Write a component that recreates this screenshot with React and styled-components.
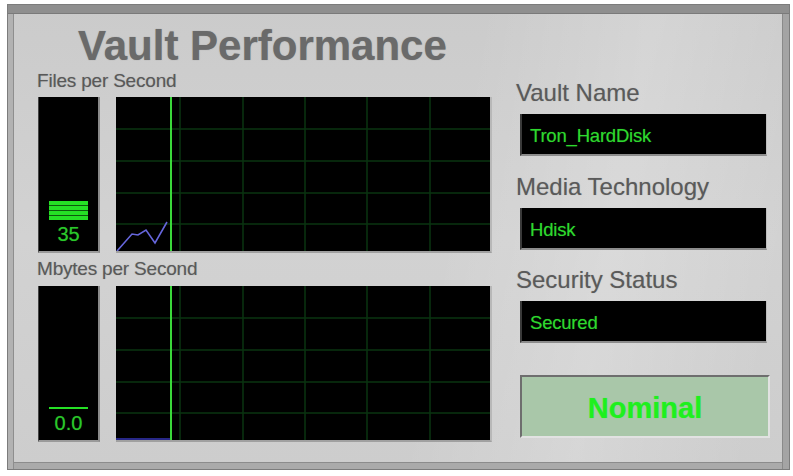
import React from "react";
import styled, { createGlobalStyle } from "styled-components";

const Global = createGlobalStyle`
  html, body { margin: 0; padding: 0; background: #ffffff; }
  body { font-family: "Liberation Sans", Arial, sans-serif; }
`;

const Frame = styled.div`
  box-sizing: border-box;
  margin: 4px 0 0 7px;
  width: 783px;
  height: 466px;
  border: 1px solid #7c7c7c;
  background:
    linear-gradient(100deg, rgba(255,255,255,0) 55%, rgba(255,255,255,0.18) 75%, rgba(255,255,255,0) 95%),
    linear-gradient(180deg, #cbcbcb 0%, #d2d2d2 50%, #cdcdcd 100%);
  box-shadow:
    inset 0 8px 0 #8f8f8f,
    inset 0 9px 0 #7a7a7a,
    inset 5px 0 0 #b2b2b2,
    inset 6px 0 0 #8e8e8e,
    inset -6px 0 0 #a4a4a4,
    inset -7px 0 0 #8a8a8a,
    inset 0 -6px 0 #aaaaaa,
    inset 0 -7px 0 #8c8c8c;
  padding: 20px 19px 0 29px;
  display: grid;
  grid-template-columns: 455px 254px;
  column-gap: 24px;
  align-items: start;
`;

const LeftCol = styled.div`
  display: flex;
  flex-direction: column;
`;

const RightCol = styled.div`
  display: flex;
  flex-direction: column;
  padding-top: 56px;
`;

const Title = styled.h1`
  margin: 0 0 0 41px;
  font-family: "Liberation Sans", Arial, sans-serif;
  font-weight: bold;
  font-size: 42px;
  line-height: 42px;
  color: #6a6a6a;
  text-shadow: 0 0 1px rgba(80, 80, 80, 0.5);
  white-space: nowrap;
`;

const ChartLabel = styled.div`
  margin-top: ${(p) => p.$top}px;
  font-size: 19px;
  line-height: 19px;
  color: #595959;
  letter-spacing: -0.2px;
  text-shadow: 0 0 1px rgba(90, 90, 90, 0.4);
  white-space: nowrap;
`;

const ChartRow = styled.div`
  margin-top: ${(p) => p.$top}px;
  margin-left: 1px;
  display: flex;
  gap: 16px;
  height: 156px;
`;

const Meter = styled.div`
  box-sizing: border-box;
  width: 62px;
  height: 156px;
  background: #000;
  border-right: 2px solid #8a8a8a;
  border-bottom: 2px solid #9a9a9a;
  border-left: 1px solid #444;
  display: flex;
  flex-direction: column;
  justify-content: flex-end;
  align-items: center;
  gap: 4px;
  padding-bottom: 7px;
`;

const Bars = styled.div`
  display: flex;
  flex-direction: column;
  gap: 1px;
  width: 39px;
  background: #0d5a0d;
`;

const Bar = styled.div`
  height: ${(p) => p.$h}px;
  background: #25e025;
`;

const MeterValue = styled.div`
  font-size: 20px;
  line-height: 20px;
  color: #2ac82a;
  text-shadow: 0 0 1px rgba(40, 220, 40, 0.5);
`;

const GraphBox = styled.div`
  box-sizing: border-box;
  width: 376px;
  height: 156px;
  background: #000;
  border-right: 2px solid #b8b8b8;
  border-bottom: 2px solid #a0a0a0;
  line-height: 0;
`;

const FieldLabel = styled.div`
  margin-top: ${(p) => p.$top}px;
  font-size: 24px;
  line-height: 24px;
  color: #5a5a5a;
  text-shadow: 0 0 1px rgba(90, 90, 90, 0.4);
  white-space: nowrap;
`;

const FieldBox = styled.div`
  box-sizing: border-box;
  margin: 9px 0 0 4px;
  width: 247px;
  height: 42px;
  background: #000;
  border-left: 2px solid #3a3a3a;
  border-bottom: 2px solid #8c8c8c;
  border-right: 1px solid #bdbdbd;
  display: flex;
  align-items: center;
  padding: 4px 0 0 8px;
  font-size: 18.5px;
  color: #2ed82e;
  letter-spacing: -0.2px;
  text-shadow: 0 0 1px rgba(40, 220, 40, 0.5);
`;

const StatusBox = styled.div`
  box-sizing: border-box;
  margin: 32px 0 0 4px;
  width: 250px;
  height: 63px;
  background: #a9c7a9;
  border-top: 2px solid #6e6e6e;
  border-left: 2px solid #6e6e6e;
  border-right: 2px solid #e2e2e2;
  border-bottom: 2px solid #e2e2e2;
  display: flex;
  align-items: center;
  justify-content: center;
  padding-top: 4px;
  font-weight: bold;
  font-size: 29px;
  color: #1ef01e;
  text-shadow: 0 0 1px rgba(30, 240, 30, 0.6);
`;

const VLINES = [64, 127, 189, 251, 314];
const HLINES = [32, 64, 96, 127];

function Graph({ trace, traceColor, cursor }) {
  return (
    <GraphBox>
      <svg width="374" height="154" viewBox="0 0 374 154">
        {VLINES.map((x) => (
          <line key={"v" + x} x1={x} y1="0" x2={x} y2="154" stroke="#0a3410" strokeWidth="1.5" />
        ))}
        {HLINES.map((y) => (
          <line key={"h" + y} x1="0" y1={y} x2="374" y2={y} stroke="#0a3410" strokeWidth="1.5" />
        ))}
        <polyline points={trace} fill="none" stroke={traceColor} strokeWidth="1.6" />
        <line x1={cursor} y1="0" x2={cursor} y2="154" stroke="#3ad83a" strokeWidth="2" />
      </svg>
    </GraphBox>
  );
}

function Field({ label, value, top }) {
  return (
    <>
      <FieldLabel $top={top}>{label}</FieldLabel>
      <FieldBox>{value}</FieldBox>
    </>
  );
}

export default function App() {
  return (
    <>
      <Global />
      <Frame>
        <LeftCol>
          <Title>Vault Performance</Title>
          <ChartLabel $top={4}>Files per Second</ChartLabel>
          <ChartRow $top={7}>
            <Meter>
              <Bars>
                <Bar $h={4} />
                <Bar $h={4} />
                <Bar $h={4} />
                <Bar $h={4} />
              </Bars>
              <MeterValue>35</MeterValue>
            </Meter>
            <Graph
              trace="1,154 16,137 22,138 30,133 39,146 51,125"
              traceColor="#6666dc"
              cursor={55}
            />
          </ChartRow>
          <ChartLabel $top={6}>Mbytes per Second</ChartLabel>
          <ChartRow $top={8}>
            <Meter>
              <Bars>
                <Bar $h={2} />
              </Bars>
              <MeterValue>0.0</MeterValue>
            </Meter>
            <Graph trace="0,153 55,153" traceColor="#3434b4" cursor={55} />
          </ChartRow>
        </LeftCol>
        <RightCol>
          <Field label="Vault Name" value="Tron_HardDisk" top={0} />
          <Field label="Media Technology" value="Hdisk" top={19} />
          <Field label="Security Status" value="Secured" top={18} />
          <StatusBox>Nominal</StatusBox>
        </RightCol>
      </Frame>
    </>
  );
}
